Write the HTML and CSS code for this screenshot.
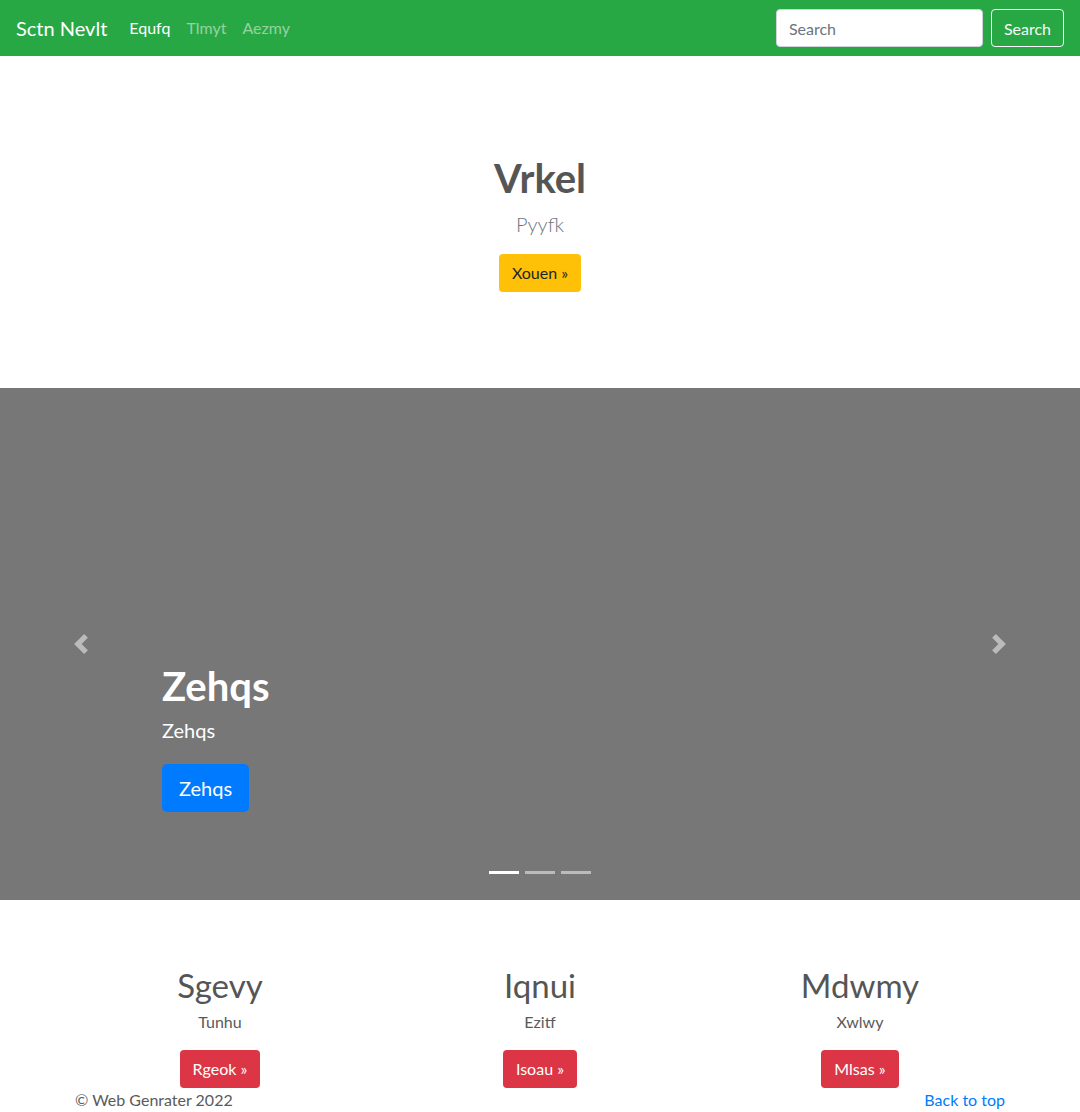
FILE: index.html
```html
<!DOCTYPE html>
<html lang="en">
<head>
<meta charset="utf-8">
<title>Sctn Nevlt</title>
<link rel="stylesheet" href="styles.css">
</head>
<body>
<nav class="navbar">
  <a class="brand" href="#">Sctn Nevlt</a>
  <ul class="nav-links">
    <li><a class="nav-link active" href="#">Equfq</a></li>
    <li><a class="nav-link" href="#">Tlmyt</a></li>
    <li><a class="nav-link" href="#">Aezmy</a></li>
  </ul>
  <form class="search-form">
    <input class="search-input" type="text" placeholder="Search">
    <button class="search-btn" type="button">Search</button>
  </form>
</nav>

<section class="hero">
  <h1 class="hero-title">Vrkel</h1>
  <p class="hero-lead">Pyyfk</p>
  <a class="btn btn-warning" href="#">Xouen »</a>
</section>

<div class="carousel">
  <a class="control control-prev" href="#">
    <svg width="20" height="20" viewBox="0 0 8 8"><path fill="#fff" d="M5.25 0l-4 4 4 4 1.5-1.5L4.25 4l2.5-2.5L5.25 0z"/></svg>
  </a>
  <div class="caption">
    <h1 class="caption-title">Zehqs</h1>
    <p class="caption-text">Zehqs</p>
    <a class="btn btn-lg btn-primary" href="#">Zehqs</a>
  </div>
  <a class="control control-next" href="#">
    <svg width="20" height="20" viewBox="0 0 8 8"><path fill="#fff" d="M2.75 0l-1.5 1.5L3.75 4l-2.5 2.5L2.75 8l4-4-4-4z"/></svg>
  </a>
  <ol class="indicators">
    <li class="indicator active"></li>
    <li class="indicator"></li>
    <li class="indicator"></li>
  </ol>
</div>

<div class="marketing">
  <div class="col">
    <h2 class="col-title">Sgevy</h2>
    <p class="col-text">Tunhu</p>
    <a class="btn btn-danger" href="#">Rgeok »</a>
  </div>
  <div class="col">
    <h2 class="col-title">Iqnui</h2>
    <p class="col-text">Ezitf</p>
    <a class="btn btn-danger" href="#">Isoau »</a>
  </div>
  <div class="col">
    <h2 class="col-title">Mdwmy</h2>
    <p class="col-text">Xwlwy</p>
    <a class="btn btn-danger" href="#">Mlsas »</a>
  </div>
</div>

<footer class="footer">
  <p class="copyright">© Web Genrater 2022</p>
  <a class="back-top" href="#">Back to top</a>
</footer>
</body>
</html>
```

FILE: styles.css
```css
* { box-sizing: border-box; }

body {
  margin: 0;
  font-family: Lato, "Noto Sans", sans-serif;
  font-size: 16px;
  line-height: 24px;
  color: #5a5a5a;
  background: #fff;
}

a { text-decoration: none; }

.navbar {
  height: 56px;
  padding: 0 16px;
  background: #28a745;
  display: flex;
  align-items: center;
}

.brand {
  color: #fff;
  font-size: 20px;
  line-height: 30px;
  margin-right: 14px;
}

.nav-links {
  list-style: none;
  margin: 0;
  padding: 0;
  display: flex;
}

.nav-link {
  display: block;
  padding: 8px;
  color: rgba(255, 255, 255, 0.5);
}

.nav-link.active { color: #fff; }

.search-form {
  margin-left: auto;
  display: flex;
  align-items: center;
}

.search-input {
  width: 207px;
  height: 38px;
  padding: 6px 12px;
  border: 1px solid #ced4da;
  border-radius: 4px;
  font-family: inherit;
  font-size: 16px;
  color: #495057;
}

.search-input::placeholder { color: #6c757d; }

.search-btn {
  margin-left: 8px;
  height: 38px;
  padding: 0 12px;
  border: 1px solid #f8f9fa;
  border-radius: 4px;
  background: transparent;
  color: #f8f9fa;
  font-family: inherit;
  font-size: 16px;
}

.hero {
  padding: 98px 0 96px;
  text-align: center;
}

.hero-title {
  margin: 0 0 7px;
  font-size: 40px;
  line-height: 48px;
  font-weight: 700;
  color: #555;
}

.hero-lead {
  margin: 0 0 15px;
  font-size: 20px;
  line-height: 30px;
  font-weight: 300;
  color: #6c757d;
}

.btn {
  display: inline-block;
  padding: 6px 12px;
  border: 1px solid transparent;
  border-radius: 4px;
  font-size: 16px;
  line-height: 24px;
}

.btn-warning { background: #ffc107; color: #212529; }
.btn-danger { background: #dc3545; color: #fff; }
.btn-primary { background: #007bff; color: #fff; }

.btn-lg {
  padding: 8px 16px;
  font-size: 20px;
  line-height: 30px;
  border-radius: 5px;
}

.carousel {
  position: relative;
  height: 512px;
  background: #777;
}

.caption {
  position: absolute;
  left: 162px;
  right: 162px;
  bottom: 88px;
  color: #fff;
}

.caption-title {
  margin: 0 0 5px;
  font-size: 40px;
  line-height: 48px;
  font-weight: 700;
}

.caption-text {
  margin: 0 0 19px;
  font-size: 20px;
  line-height: 30px;
}

.control {
  position: absolute;
  top: 0;
  bottom: 0;
  width: 15%;
  display: flex;
  align-items: center;
  justify-content: center;
  opacity: 0.5;
}

.control-prev { left: 0; }
.control-next { right: 0; }

.indicators {
  position: absolute;
  left: 0;
  right: 0;
  bottom: 26px;
  margin: 0;
  padding: 0;
  list-style: none;
  display: flex;
  justify-content: center;
  gap: 6px;
}

.indicator {
  width: 30px;
  height: 3px;
  background: #fff;
  opacity: 0.5;
}

.indicator.active { opacity: 1; }

.marketing {
  width: 960px;
  margin: 0 auto;
  padding-top: 66px;
  display: grid;
  grid-template-columns: repeat(3, 1fr);
  text-align: center;
}

.col-title {
  margin: 0 0 6px;
  font-size: 33px;
  line-height: 38px;
  font-weight: 400;
  color: #555;
}

.col-text {
  margin: 0 0 16px;
}

.footer {
  width: 960px;
  margin: 0 auto;
  padding: 0 15px;
  display: flex;
  justify-content: space-between;
}

.copyright { margin: 0; }

.back-top { color: #007bff; }
```
